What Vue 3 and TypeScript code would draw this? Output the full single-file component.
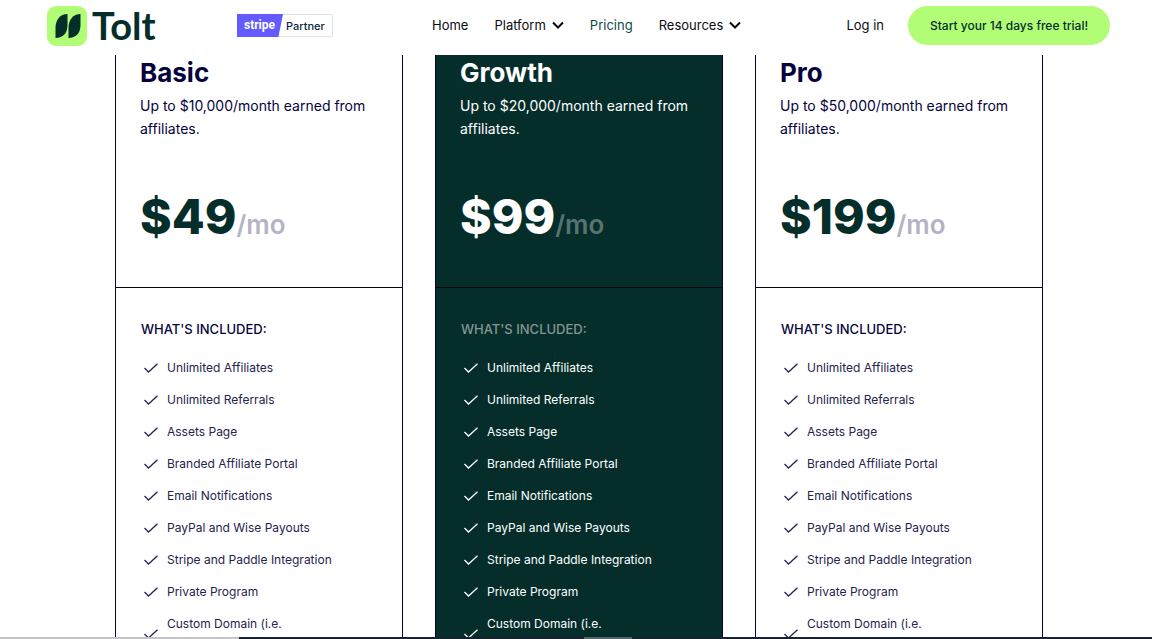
<script setup lang="ts">
interface Plan {
  name: string
  limit: string
  price: string
  featured: boolean
}

const plans: Plan[] = [
  { name: 'Basic', limit: '$10,000', price: '$49', featured: false },
  { name: 'Growth', limit: '$20,000', price: '$99', featured: true },
  { name: 'Pro', limit: '$50,000', price: '$199', featured: false },
]

const features: string[] = [
  'Unlimited Affiliates',
  'Unlimited Referrals',
  'Assets Page',
  'Branded Affiliate Portal',
  'Email Notifications',
  'PayPal and Wise Payouts',
  'Stripe and Paddle Integration',
  'Private Program',
  'Custom Domain (i.e.',
]
</script>

<template>
  <div class="page">
    <header class="header">
      <a class="logo" href="#" aria-label="Tolt">
        <svg class="logo-mark" viewBox="0 0 40 40" aria-hidden="true">
          <rect width="40" height="40" rx="9" fill="#b1fe76" />
          <path d="M8.500 32V22C8.500 14 13 8 20.500 8V19C20.500 27 16 32 8.500 32Z" fill="#052e2b" />
          <path d="M21.500 32V22C21.500 14 26 8 33.500 8V19C33.500 27 29 32 21.500 32Z" fill="#052e2b" />
        </svg>
        <span class="logo-text">Tolt</span>
      </a>
      <a class="partner" href="#">
        <span class="partner-stripe">stripe</span>
        <span class="partner-label">Partner</span>
      </a>
      <nav class="nav">
        <a href="#">Home</a>
        <button type="button">
          Platform
          <svg class="chevron" viewBox="0 0 12 8" aria-hidden="true"><path d="M1 1.500L6 6.500L11 1.500" /></svg>
        </button>
        <a class="current" href="#" aria-current="page">Pricing</a>
        <button type="button">
          Resources
          <svg class="chevron" viewBox="0 0 12 8" aria-hidden="true"><path d="M1 1.500L6 6.500L11 1.500" /></svg>
        </button>
      </nav>
      <div class="account">
        <a class="login" href="#">Log in</a>
        <a class="trial" href="#">Start your 14 days free trial!</a>
      </div>
    </header>

    <main class="plans">
      <section v-for="plan in plans" :key="plan.name" class="plan" :class="{ featured: plan.featured }">
        <div class="summary">
          <h2>{{ plan.name }}</h2>
          <p class="limit">Up to {{ plan.limit }}/month earned from affiliates.</p>
          <p class="price">{{ plan.price }}<span>/mo</span></p>
        </div>
        <div class="included">
          <h3>WHAT'S INCLUDED:</h3>
          <ul>
            <li v-for="feature in features" :key="feature">
              <svg class="check" viewBox="0 0 14 10" aria-hidden="true"><path d="M0.500 5L4.500 9L13.500 0.700" /></svg>
              <span>{{ feature }}</span>
            </li>
          </ul>
        </div>
      </section>
    </main>

    <footer class="edge">
      <span class="edge-light"></span>
      <span class="edge-dark"><span class="edge-grip"></span></span>
    </footer>
  </div>
</template>

<style>
body {
  margin: 0;
  background: #fff;
}
</style>

<style scoped>
.page {
  display: flex;
  flex-direction: column;
  height: 100vh;
  overflow: hidden;
  font-family: Inter, "Liberation Sans", sans-serif;
  color: #05033d;
}
a {
  color: inherit;
  text-decoration: none;
}
.header {
  display: flex;
  flex: none;
  align-items: center;
  height: 51px;
  padding: 0 42px 4px 47px;
  color: #0b0b12;
  font-size: 13px;
}
.logo {
  display: flex;
  align-items: center;
  gap: 5px;
  width: 190px;
  color: #052e2b;
}
.logo-mark {
  width: 40px;
  height: 40px;
}
.logo-text {
  font-family: Lato, sans-serif;
  font-size: 38px;
  font-weight: 700;
  line-height: 38px;
  padding-bottom: 2px;
}
.partner {
  display: flex;
  box-sizing: border-box;
  width: 96px;
  height: 23px;
  border: 1px solid #dfe3ec;
  border-radius: 2px;
  line-height: 22px;
}
.partner-stripe {
  flex: none;
  box-sizing: border-box;
  width: 46px;
  height: 23px;
  margin: -1px 0 0 -1px;
  padding-left: 7px;
  background: #635bff;
  clip-path: polygon(0 0, 100% 0, 90% 100%, 0 100%);
  color: #fff;
  font-family: Roboto, sans-serif;
  font-size: 12px;
  font-weight: 700;
}
.partner-label {
  padding-left: 3px;
  color: #0a2540;
  font-size: 11px;
  font-weight: 500;
}
.nav {
  display: flex;
  align-items: center;
  gap: 26px;
  margin-left: 99px;
}
.nav,
.login {
  padding-bottom: 2px;
}
.nav button {
  display: flex;
  align-items: center;
  gap: 6px;
  padding: 0;
  border: 0;
  background: none;
  color: inherit;
  font: inherit;
}
.nav .current {
  color: #0b4a42;
}
.chevron {
  width: 12px;
  height: 8px;
  fill: none;
  stroke: currentColor;
  stroke-width: 2;
}
.account {
  display: flex;
  align-items: center;
  gap: 24px;
  margin-left: auto;
}
.trial {
  box-sizing: border-box;
  width: 202px;
  border-radius: 20px;
  background: #b1fe76;
  color: #052e2b;
  font-size: 12px;
  font-weight: 500;
  line-height: 39px;
  text-align: center;
  white-space: nowrap;
}
.plans {
  display: grid;
  flex: 1;
  grid-template-columns: repeat(3, minmax(0, 1fr));
  gap: 32px;
  min-height: 0;
  padding: 0 109px 0 115px;
  overflow: hidden;
}
.plan {
  border: solid #05033d;
  border-width: 0 1px;
}
.plan.featured {
  background: #052e2b;
  color: #fff;
}
.summary {
  box-sizing: border-box;
  height: 233px;
  padding: 0 24px;
  border-bottom: 1px solid #05060f;
}
h2 {
  margin: 0;
  font-size: 26px;
  font-weight: 700;
  line-height: 36px;
}
.limit {
  margin: 3px 0 0;
  font-size: 14px;
  line-height: 23px;
}
.price {
  margin: 44px 0 0;
  color: #052e2b;
  font-size: 48px;
  font-weight: 800;
  line-height: 66px;
}
.price span {
  color: #b4b3c5;
  font-size: 26px;
  font-weight: 600;
}
.featured .price {
  color: #fff;
}
.featured .price span {
  color: #58736f;
}
.included {
  padding: 31px 25px 0;
}
h3 {
  margin: 0;
  font-size: 13px;
  font-weight: 500;
  line-height: 20px;
}
.featured h3 {
  color: #829693;
}
ul {
  display: grid;
  gap: 12px;
  margin: 19px 0 0;
  padding: 0;
  list-style: none;
}
li {
  display: flex;
  align-items: center;
  gap: 9px;
  height: 20px;
  padding-left: 3px;
  font-size: 12px;
  font-weight: 400;
  line-height: 20px;
}
.plan:not(.featured) li {
  color: #25234f;
}
li:last-child {
  height: 40px;
}
li:last-child span {
  align-self: flex-start;
}
.check {
  width: 14px;
  height: 10px;
  fill: none;
  stroke: currentColor;
  stroke-width: 1.3;
}
.edge {
  display: flex;
  flex: none;
  height: 2px;
}
.edge-light {
  width: 239px;
  background: #c4c4c6;
}
.edge-dark {
  display: flex;
  flex: 1;
  background: #17222e;
}
.edge-grip {
  width: 48px;
  margin-left: 345px;
  background: #52636a;
}
</style>
